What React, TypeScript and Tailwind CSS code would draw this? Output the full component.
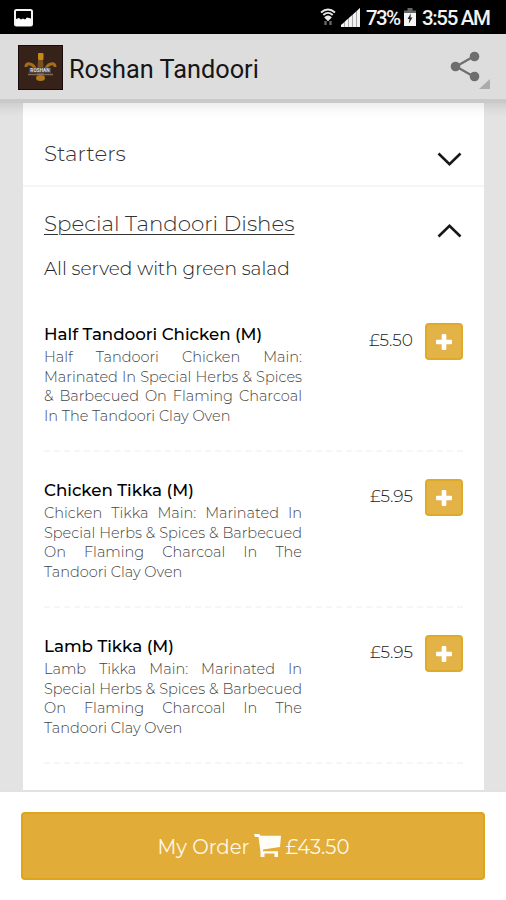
import { useState } from "react";

type Dish = {
  name: string;
  lines: string[];
  price: string;
};

const dishes: Dish[] = [
  {
    name: "Half Tandoori Chicken (M)",
    lines: [
      "Half Tandoori Chicken Main:",
      "Marinated In Special Herbs & Spices",
      "& Barbecued On Flaming Charcoal",
      "In The Tandoori Clay Oven",
    ],
    price: "£5.50",
  },
  {
    name: "Chicken Tikka (M)",
    lines: [
      "Chicken Tikka Main: Marinated In",
      "Special Herbs & Spices & Barbecued",
      "On Flaming Charcoal In The",
      "Tandoori Clay Oven",
    ],
    price: "£5.95",
  },
  {
    name: "Lamb Tikka (M)",
    lines: [
      "Lamb Tikka Main: Marinated In",
      "Special Herbs & Spices & Barbecued",
      "On Flaming Charcoal In The",
      "Tandoori Clay Oven",
    ],
    price: "£5.95",
  },
];

export default function App() {
  const [open, setOpen] = useState(true);

  return (
    <div className="flex h-[900px] w-[506px] flex-col overflow-hidden bg-[#e3e3e3] font-['Montserrat','Inter',sans-serif] font-light">
      <StatusBar />
      <Header />
      <main className="flex min-h-0 flex-1 flex-col bg-[linear-gradient(to_bottom,#cfcfcf_0px,#dcdcdc_7px,#e3e3e3_14px)] pr-[22px] pl-[23px]">
        <div className="flex-1 overflow-hidden bg-[linear-gradient(to_bottom,#ededed_0px,#fafafa_8px,#ffffff_15px)]">
          <div className="flex h-[84px] items-start justify-between border-b-2 border-[#f6f6f6] pt-[36px] pr-[22px] pl-[21px]">
            <h2 className="text-[21.4px] leading-7 text-[#333]">Starters</h2>
            <Chevron className="mt-[13px]" />
          </div>
          <div
            className="flex h-[58px] items-start justify-between pt-[22px] pr-[22px] pl-[21px]"
            onClick={() => setOpen(!open)}
          >
            <h2 className="text-[21.4px] leading-7 text-[#333] underline decoration-1 underline-offset-[3px]">
              Special Tandoori Dishes
            </h2>
            <Chevron className={open ? "mt-[14px] rotate-180" : "mt-[14px]"} />
          </div>
          {open && (
            <div className="pr-[21px] pl-[21px]">
              <p className="h-[51px] pt-[12px] text-[18.6px] leading-6 text-[#222]">
                All served with green salad
              </p>
              {dishes.map((dish) => (
                <DishRow key={dish.name} dish={dish} />
              ))}
            </div>
          )}
        </div>
      </main>
      <footer className="h-[110px] border-t-2 border-[#e2e2e2] bg-white px-[21px] pt-[20px]">
        <button className="flex h-[68px] w-full items-center justify-center rounded-[4px] border-2 border-[#dda41c] bg-[#e1ac38] pt-[4px] pl-px text-[19.7px] font-normal text-[#fff8e4]">
          <span>My Order</span>
          <CartIcon />
          <span>£43.50</span>
        </button>
      </footer>
    </div>
  );
}

function DishRow({ dish }: { dish: Dish }) {
  return (
    <div className="flex h-[156px] items-start justify-between border-b-2 border-dashed border-[#f6f6f6] pt-[26px]">
      <div className="w-[258px]">
        <h3 className="text-[16.7px] leading-[25px] font-medium whitespace-nowrap text-black">
          {dish.name}
        </h3>
        <div className="pt-px text-[14.5px] leading-[19.6px] text-[#444]">
          {dish.lines.map((line, i) => (
            <p
              key={line}
              className={
                i < dish.lines.length - 1
                  ? "whitespace-nowrap [text-align-last:justify]"
                  : "whitespace-nowrap"
              }
            >
              {line}
            </p>
          ))}
        </div>
      </div>
      <div className="flex items-start">
        <span className="pt-[8px] text-[17px] leading-5 text-[#222]">
          {dish.price}
        </span>
        <button className="ml-3 mt-px flex h-[37px] w-[38px] items-center justify-center rounded-[4px] border-2 border-[#dfa92a] bg-[#e3b348]">
          <svg width="16" height="16" viewBox="0 0 16 16" fill="#fff">
            <path d="M6.7 0h2.6q1 0 1 1v4.7H15q1 0 1 1v2.6q0 1-1 1h-4.7V15q0 1-1 1H6.7q-1 0-1-1v-4.7H1q-1 0-1-1V6.7q0-1 1-1h4.7V1q0-1 1-1z" />
          </svg>
        </button>
      </div>
    </div>
  );
}

function StatusBar() {
  return (
    <div className="flex h-[34px] shrink-0 items-center justify-between bg-black pt-px pr-[15px] pl-[14px] font-[Roboto] font-medium text-[#f2f2f2]">
      <svg width="19" height="18" viewBox="0 0 19 18">
        <rect x="1" y="1" width="17" height="15.5" rx="1.5" fill="#000" stroke="#f4f4f4" strokeWidth="2" />
        <path d="M2 10l3-1 2 1.5 2-1 2 1 2-2 4 1V17H2z" fill="#fff" />
      </svg>
      <div className="flex items-center">
        <svg className="mr-[5px]" width="16" height="19" viewBox="0 0 16 19" fill="none" stroke="#e8e8e8" strokeWidth="1.8">
          <path d="M1 4.5Q8 -1.5 15 4.5" />
          <path d="M3.3 7Q8 2.8 12.7 7" />
          <path d="M5.5 9.5Q8 7.2 10.5 9.5L8 12z" fill="#e8e8e8" />
          <path d="M5.5 13v4M10.5 13v4" stroke="#666" strokeWidth="2.4" />
        </svg>
        <svg className="mr-[6px]" width="19" height="19" viewBox="0 0 19 19">
          <path d="M0 19v-2L19 0v19z" fill="#aaa" />
          <path d="M0 19v-2l3-2v4zM4 19v-5.5l3-2.5v8zM8 19V10l3-2.5V19zM12 19V6.5l3-2.5v15zM16 19V3l3-3v19z" fill="#f2f2f2" />
        </svg>
        <span className="w-[34px] text-[20.5px] leading-5 tracking-[-1.7px]">73%</span>
        <svg className="mr-[6px] ml-[4px]" width="12" height="19" viewBox="0 0 12 19">
          <path d="M3.5 0h5v2.5H12V6H0V2.5h3.5z" fill="#666" />
          <path d="M0 5h12v13H0z" fill="#f5f5f5" />
          <path d="M6.8 5.5L3.5 11h2l-.7 4.5L8.5 9.5h-2z" fill="#222" />
        </svg>
        <span className="w-[69px] text-[20.5px] leading-5 tracking-[-1.35px] whitespace-nowrap">
          3:55 AM
        </span>
      </div>
    </div>
  );
}

function Header() {
  return (
    <header className="flex h-[69px] shrink-0 items-center border-b-[4px] border-[#c9c9c9] bg-[#dddddd] pt-[3px] pr-[16px] pl-[18px] font-[Roboto]">
      <Logo />
      <h1 className="ml-[6px] flex-1 pt-[4px] text-[25.3px] leading-8 font-normal text-[#161616]">
        Roshan Tandoori
      </h1>
      <svg className="mt-[4px]" width="40" height="40" viewBox="0 0 40 40" fill="#6e6e6e">
        <path d="M24.5 6L6 16.5L24.5 27" fill="none" stroke="#6e6e6e" strokeWidth="2.2" />
        <circle cx="5.5" cy="16.5" r="4.8" />
        <circle cx="24.5" cy="6.5" r="4.8" />
        <circle cx="24.5" cy="26.5" r="4.8" />
        <path d="M40 29v10H29z" fill="#ababab" />
      </svg>
    </header>
  );
}

function Logo() {
  return (
    <svg className="-mt-px shrink-0" width="45" height="45" viewBox="0 0 45 45">
      <rect x="0.5" y="0.5" width="44" height="44" fill="#37221a" stroke="#170b0b" />
      <g fill="none" stroke="#a66f16" strokeWidth="3">
        <path d="M8 22Q8 18 12 19Q17 20 18 27" />
        <path d="M37 22Q37 18 33 19Q28 20 27 27" />
      </g>
      <rect x="20" y="8" width="5.5" height="7" rx="1" fill="#c48a18" />
      <path d="M20 15h5l1 14h-7z" fill="#7b5223" />
      <ellipse cx="22.5" cy="33" rx="4.5" ry="3" fill="#b1781b" />
      <rect x="11" y="22.5" width="22" height="5.5" fill="#574238" />
      <text x="22" y="27" textAnchor="middle" fontSize="4.8" fontWeight="700" fill="#dddce4">
        ROSHAN
      </text>
      <path d="M10 29.5h25" stroke="#806d61" strokeWidth="1.5" />
    </svg>
  );
}

function Chevron({ className }: { className?: string }) {
  return (
    <svg
      className={className}
      width="25"
      height="15"
      viewBox="0 0 25 15"
      fill="none"
      stroke="#181818"
      strokeWidth="2.6"
    >
      <path d="M1.5 1.5l11 10.8l11-10.8" />
    </svg>
  );
}

function CartIcon() {
  return (
    <svg className="-mt-1 mr-[4px] ml-[5px]" width="27" height="24" viewBox="0 0 27 24" fill="#fffdf5">
      <path d="M0 0h5.2l1.3 1.8H27l-1 11.2L9 15.5v1.7h15V23h-3.5v-3.5h-10V23H6.5v-5L4.5 3H1z" />
    </svg>
  );
}
